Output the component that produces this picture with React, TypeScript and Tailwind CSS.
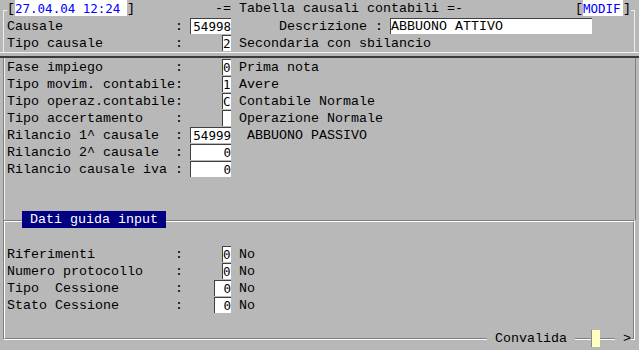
import React from "react";

const mono = "font-['Liberation_Mono','Courier_New',monospace]";
const sans = "font-['DejaVu_Sans_Mono','Liberation_Mono',monospace]";

function Row({ children }: { children: React.ReactNode }) {
  return <div className="flex h-[17px] leading-[19px] whitespace-pre">{children}</div>;
}

function Box({
  w,
  right = false,
  serif = false,
  children,
}: {
  w: string;
  right?: boolean;
  serif?: boolean;
  children?: React.ReactNode;
}) {
  return (
    <span
      className={`-ml-px mt-px h-[16px] leading-[16px] border-l border-t border-[#404040] bg-white whitespace-pre ${w} ${
        right ? "text-right" : "text-left"
      } ${serif ? mono : sans + " text-[12.5px]"}`}
    >
      {children}
    </span>
  );
}

export default function App() {
  return (
    <div className={`w-[639px] h-[350px] bg-[#b8b8b8] text-black text-[13.333px] ${mono} overflow-hidden`}>
      {/* testata */}
      <div className="flex h-[17px] leading-[18px] whitespace-pre">
        <div className="ml-[3px] w-[4px] mt-[10px] border-l border-t border-[#ececec]" />
        <span>[</span>
        <span className={`w-[112px] h-[16px] leading-[17px] bg-white text-[#0000ff] ${sans} text-[12.5px]`}>27.04.04 12:24</span>
        <span>]</span>
        <span>{"          -= Tabella causali contabili =-              ["}</span>
        <span className={`w-[40px] h-[16px] leading-[17px] bg-white text-[#0000ff] ${sans} text-[12.5px]`}>MODIF</span>
        <span>]</span>
        <div className="w-[4px] mt-[10px] border-r border-t border-[#ececec]" />
      </div>
      <div className="ml-[3px] w-[632px] h-[35px] border-x border-[#ececec] pl-[3px]">
        <Row>
          <span>{"Causale              : "}</span>
          <Box w="w-[41px]" right>54998</Box>
          <span>{"      Descrizione : "}</span>
          <Box w="w-[202px]" serif>ABBUONO ATTIVO</Box>
        </Row>
        <Row>
          <span>{"Tipo causale         :     "}</span>
          <Box w="w-[9px]">2</Box>
          <span>{" Secondaria con sbilancio"}</span>
        </Row>
      </div>
      <div className="h-px bg-[#f4f4f4]" />
      <div className="h-[3px]" />
      <div className="h-[2px] bg-[#3a3a3a]" />

      {/* dati contabili */}
      <div className="ml-[3px] w-[633px] h-[162px] border-l border-r border-[#808080] shadow-[inset_1px_0_0_#f0f0f0] pl-[3px]">
        <Row>
          <span>{"Fase impiego         :     "}</span>
          <Box w="w-[9px]">0</Box>
          <span>{" Prima nota"}</span>
        </Row>
        <Row>
          <span>{"Tipo movim. contabile:     "}</span>
          <Box w="w-[9px]">1</Box>
          <span>{" Avere"}</span>
        </Row>
        <Row>
          <span>{"Tipo operaz.contabile:     "}</span>
          <Box w="w-[9px]">C</Box>
          <span>{" Contabile Normale"}</span>
        </Row>
        <Row>
          <span>{"Tipo accertamento    :     "}</span>
          <Box w="w-[9px]" />
          <span>{" Operazione Normale"}</span>
        </Row>
        <Row>
          <span>{"Rilancio 1^ causale  : "}</span>
          <Box w="w-[41px]" right>54999</Box>
          <span>{"  ABBUONO PASSIVO"}</span>
        </Row>
        <Row>
          <span>{"Rilancio 2^ causale  : "}</span>
          <Box w="w-[41px]" right>0</Box>
        </Row>
        <Row>
          <span>{"Rilancio causale iva : "}</span>
          <Box w="w-[41px]" right>0</Box>
        </Row>
      </div>

      {/* dati guida input */}
      <div className="relative ml-[3px] w-[632px] h-[120px] border border-[#808080] border-r-white border-b-white">
        <div className="h-full border border-white border-r-[#808080] border-b-[#808080] pl-[2px] pt-[23px]">
          <Row>
            <span>{"Riferimenti          :     "}</span>
            <Box w="w-[9px]">0</Box>
            <span>{" No"}</span>
          </Row>
          <Row>
            <span>{"Numero protocollo    :     "}</span>
            <Box w="w-[9px]">0</Box>
            <span>{" No"}</span>
          </Row>
          <Row>
            <span>{"Tipo  Cessione       :    "}</span>
            <Box w="w-[17px]" right>0</Box>
            <span>{" No"}</span>
          </Row>
          <Row>
            <span>{"Stato Cessione       :    "}</span>
            <Box w="w-[17px]" right>0</Box>
            <span>{" No"}</span>
          </Row>
        </div>

        <div className="absolute left-[18px] top-[-10px] h-[17px] leading-[17px] bg-[#000080] text-white whitespace-pre">
          {" Dati guida input "}
        </div>

        <div className="absolute left-[483px] top-[109px] flex h-[17px] leading-[18px] whitespace-pre">
          <span className="bg-[#b8b8b8]">{" Convalida "}</span>
          <span className="w-[16px]" />
          <span className="w-[9px] h-[17px] border-l border-[#8a8a8a] bg-[#ffffc0]" />
          <span className="w-[15px]" />
          <span className="bg-[#b8b8b8]">{" >"}</span>
        </div>
      </div>
    </div>
  );
}
